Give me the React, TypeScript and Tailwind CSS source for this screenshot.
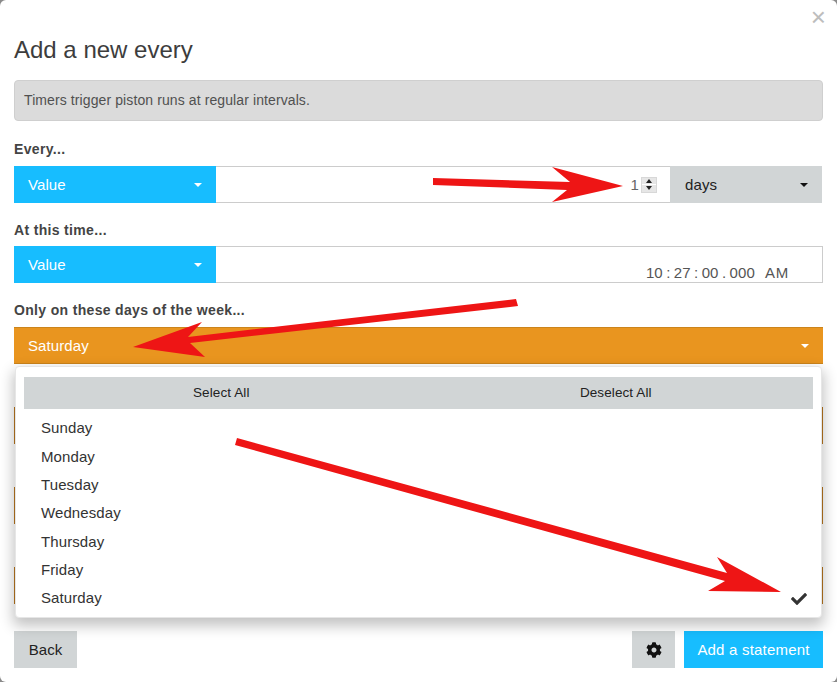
import { FaCheck, FaCog } from "react-icons/fa";

const days = ["Sunday", "Monday", "Tuesday", "Wednesday", "Thursday", "Friday", "Saturday"];

const Caret = ({ className }: { className: string }) => (
  <span className={`h-0 w-0 border-x-[4px] border-t-[4px] border-x-transparent ${className}`} />
);

const ValueButton = () => (
  <div className="flex h-full w-[202px] shrink-0 items-center justify-between bg-[#17bdff] pl-[14px] pr-[14px] text-white">
    <span className="pt-[1px]">Value</span>
    <Caret className="border-t-white" />
  </div>
);

const Label = ({ children }: { children: string }) => (
  <div className="flex h-[20px] items-center text-[14px] font-bold tracking-[0.33px] text-[#444]">{children}</div>
);

// rows hidden behind the open menu, only their shaded ends show
const HiddenRow = () => (
  <div className="mt-[43px] flex h-[37px] items-center bg-[#b8751f]" />
);

export default function App() {
  return (
    <div className="relative h-[682px] w-[837px] overflow-hidden bg-[#8a8a8a] font-['Liberation_Sans',Arial,sans-serif] text-[15px] tracking-[0.1px] text-[#333]">
      <div className="flex h-full flex-col rounded-[6px] bg-white px-[14px]">
        <div className="flex h-[34px] items-start justify-end pt-[4px]">
          <span className="mr-[-3px] text-[26px] leading-[26px] text-[#bdbdbd]">×</span>
        </div>
        <h1 className="flex h-[32px] items-center text-[24px] font-normal leading-none tracking-normal text-[#3d3d3d]">
          Add a new every
        </h1>
        <div className="mt-[14px] flex h-[41px] w-[809px] items-center rounded-[4px] border border-[#cfcfcf] bg-[#dbdbdb] px-[9px] text-[14px] text-[#505050]">
          Timers trigger piston runs at regular intervals.
        </div>

        <div className="mt-[18px]">
          <Label>Every...</Label>
        </div>
        <div className="mt-[7px] flex h-[37px] w-[808px]">
          <ValueButton />
          <div className="flex flex-1 items-center justify-end border-y border-[#cccccc] bg-white pr-[13px] text-[#666]">
            <span className="mr-[2px] pt-[1px]">1</span>
            <div className="flex h-[16px] w-[16px] flex-col gap-[1px] border border-[#d8d8d8] bg-white">
              <div className="flex flex-1 items-center justify-center bg-[#e6e6e6]">
                <span className="h-0 w-0 border-x-[3.5px] border-b-[4px] border-x-transparent border-b-[#222]" />
              </div>
              <div className="flex flex-1 items-center justify-center bg-[#e6e6e6]">
                <span className="h-0 w-0 border-x-[3.5px] border-t-[4px] border-x-transparent border-t-[#222]" />
              </div>
            </div>
          </div>
          <div className="flex w-[152px] shrink-0 items-center justify-between bg-[#d1d5d6] pl-[15px] pr-[14px] text-[#222]">
            <span className="pt-[1px]">days</span>
            <Caret className="border-t-[#111]" />
          </div>
        </div>

        <div className="mt-[17px]">
          <Label>At this time...</Label>
        </div>
        <div className="mt-[6px] flex h-[37px] w-[809px]">
          <ValueButton />
          <div className="flex flex-1 items-end justify-end gap-[10px] border border-l-0 border-[#cccccc] bg-white pb-[1px] pr-[33px] text-[15px] leading-[17px] text-[#555]">
            <span className="whitespace-pre [word-spacing:-0.9px]">10 : 27 : 00 . 000</span>
            <span className="tracking-[0.8px]">AM</span>
          </div>
        </div>

        <div className="mt-[17px]">
          <Label>Only on these days of the week...</Label>
        </div>
        <div className="relative mt-[7px] w-[809px]">
          <div className="flex h-[37px] items-center justify-between border-y border-[#cb841c] bg-[#e9951f] pl-[14px] pr-[14px] text-white">
            <span className="pt-[1px]">Saturday</span>
            <Caret className="border-t-white" />
          </div>
          <div className="w-full">
            <HiddenRow />
            <HiddenRow />
            <HiddenRow />
          </div>
          <div className="absolute left-[1px] right-[1px] top-[39px] z-10 h-[252px] rounded-[4px] border border-[#e6e6e6] bg-white px-[8px] pt-[10px] shadow-[0_6px_14px_2px_rgba(0,0,0,0.24)]">
            <div className="flex h-[32px] items-center bg-[#d1d5d6] text-[13.5px] text-[#222]">
              <span className="flex-1 text-center">Select All</span>
              <span className="flex-1 text-center">Deselect All</span>
            </div>
            <ul className="pt-[5.4px]">
              {days.map((day) => (
                <li key={day} className="flex h-[28.34px] items-center justify-between pl-[17px] pr-[6px]">
                  <span>{day}</span>
                  {day === "Saturday" && <FaCheck className="text-[16px] text-[#333]" />}
                </li>
              ))}
            </ul>
          </div>
        </div>

        <div className="mt-[27px] flex h-[37px] w-[809px] items-stretch">
          <button className="w-[63px] bg-[#d1d5d6] pt-[1px] text-[#222]">Back</button>
          <button className="ml-auto flex w-[43px] items-center justify-center bg-[#d1d5d6] text-[#111]">
            <FaCog className="text-[16px]" />
          </button>
          <button className="ml-[9px] w-[139px] bg-[#17bdff] pt-[1px] tracking-[0.2px] text-white">Add a statement</button>
        </div>
      </div>

      {/* red annotation arrows drawn over the dialog */}
      <svg className="pointer-events-none absolute left-0 top-0 z-20" width="837" height="682" viewBox="0 0 837 682">
        <polygon fill="#ee1515" points="433,178 570,182 552,167 623,186 552,202 567,190 433,185" />
        <polygon fill="#ee1515" points="516,299 518,306 190,343 205,357 133,347 202,322 188,337" />
        <polygon fill="#ee1515" points="237,438 235,445 725,581 708,591 781,592 717,557 727,573" />
      </svg>
    </div>
  );
}
